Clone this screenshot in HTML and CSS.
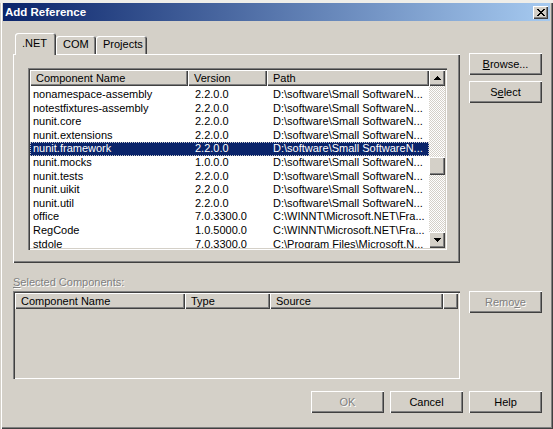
FILE: index.html
```html
<!DOCTYPE html>
<html>
<head>
<meta charset="utf-8">
<title>Add Reference</title>
<link rel="stylesheet" href="styles.css">
</head>
<body>
<div class="topstrip"></div>
<div class="window">
  <div class="titlebar">
    <span class="title">Add Reference</span>
    <span class="close"><svg width="8" height="7" viewBox="0 0 8 7"><path d="M0 0h2v1H0zM6 0h2v1H6zM1 1h2v1H1zM5 1h2v1H5zM2 2h4v1H2zM3 3h2v1H3zM2 4h4v1H2zM1 5h2v1H1zM5 5h2v1H5zM0 6h2v1H0zM6 6h2v1H6z" fill="#000"/></svg></span>
  </div>
  <div class="client">
    <div class="upper">
      <div class="tabctl">
        <div class="tabs">
          <div class="tab active t-net">.NET</div>
          <div class="tab t-com">COM</div>
          <div class="tab t-proj">Projects</div>
        </div>
        <div class="panel">
          <div class="listbox list1">
            <div class="lb-body">
              <div class="lv-header cols1">
                <div class="hcell">Component Name</div>
                <div class="hcell">Version</div>
                <div class="hcell">Path</div>
              </div>
              <div class="lv-rows">
                <div class="row cols1"><span class="c1">nonamespace-assembly</span><span class="c2">2.2.0.0</span><span class="c3">D:\software\Small SoftwareN...</span></div>
                <div class="row cols1"><span class="c1">notestfixtures-assembly</span><span class="c2">2.2.0.0</span><span class="c3">D:\software\Small SoftwareN...</span></div>
                <div class="row cols1"><span class="c1">nunit.core</span><span class="c2">2.2.0.0</span><span class="c3">D:\software\Small SoftwareN...</span></div>
                <div class="row cols1"><span class="c1">nunit.extensions</span><span class="c2">2.2.0.0</span><span class="c3">D:\software\Small SoftwareN...</span></div>
                <div class="row cols1 selected"><span class="c1">nunit.framework</span><span class="c2">2.2.0.0</span><span class="c3">D:\software\Small SoftwareN...</span></div>
                <div class="row cols1"><span class="c1">nunit.mocks</span><span class="c2">1.0.0.0</span><span class="c3">D:\software\Small SoftwareN...</span></div>
                <div class="row cols1"><span class="c1">nunit.tests</span><span class="c2">2.2.0.0</span><span class="c3">D:\software\Small SoftwareN...</span></div>
                <div class="row cols1"><span class="c1">nunit.uikit</span><span class="c2">2.2.0.0</span><span class="c3">D:\software\Small SoftwareN...</span></div>
                <div class="row cols1"><span class="c1">nunit.util</span><span class="c2">2.2.0.0</span><span class="c3">D:\software\Small SoftwareN...</span></div>
                <div class="row cols1"><span class="c1">office</span><span class="c2">7.0.3300.0</span><span class="c3">C:\WINNT\Microsoft.NET\Fra...</span></div>
                <div class="row cols1"><span class="c1">RegCode</span><span class="c2">1.0.5000.0</span><span class="c3">C:\WINNT\Microsoft.NET\Fra...</span></div>
                <div class="row cols1"><span class="c1">stdole</span><span class="c2">7.0.3300.0</span><span class="c3">C:\Program Files\Microsoft.N...</span></div>
              </div>
            </div>
            <div class="vscroll">
              <div class="sb-btn"><svg width="7" height="4" viewBox="0 0 7 4"><path d="M3 0h1v1h1v1h1v1h1v1H0V3h1V2h1V1h1z" fill="#000"/></svg></div>
              <div class="sb-track"><div class="thumb"></div></div>
              <div class="sb-btn"><svg width="7" height="4" viewBox="0 0 7 4"><path d="M0 0h7v1H6v1H5v1H4v1H3V3H2V2H1V1H0z" fill="#000"/></svg></div>
            </div>
          </div>
        </div>
      </div>
      <div class="side">
        <button class="btn"><u>B</u>rowse...</button>
        <button class="btn">S<u>e</u>lect</button>
      </div>
    </div>
    <div class="label disabled"><u>S</u>elected Components:</div>
    <div class="lower">
      <div class="listbox list2">
        <div class="lv-header cols2">
          <div class="hcell">Component Name</div>
          <div class="hcell">Type</div>
          <div class="hcell">Source</div>
          <div class="hcell"></div>
        </div>
      </div>
      <div class="side">
        <button class="btn disabled">Remo<u>v</u>e</button>
      </div>
    </div>
    <div class="footer">
      <button class="btn disabled">OK</button>
      <button class="btn">Cancel</button>
      <button class="btn">Help</button>
    </div>
  </div>
</div>
</body>
</html>
```
FILE: styles.css
```css
* { box-sizing: border-box; }
html, body { margin: 0; padding: 0; }
body {
  width: 553px;
  height: 429px;
  overflow: hidden;
  background: #D4D0C8;
  font-family: "Liberation Sans", Arial, sans-serif;
  font-size: 11px;
  color: #000;
}
.topstrip { height: 3px; background: #efeee9; }
.window {
  height: 426px;
  padding: 0 3px 2px 3px;
  display: flex;
  flex-direction: column;
  background: #D4D0C8;
  box-shadow: inset 1px 0 #D4D0C8, inset 2px 0 #fff, inset -1px -1px #404040, inset -2px -2px #808080;
}
.titlebar {
  height: 18px;
  flex: none;
  display: flex;
  align-items: center;
  justify-content: space-between;
  padding: 0 2px 0 2px;
  background: linear-gradient(to right, #0A246A, #A6CAF0);
  color: #fff;
}
.title { font-weight: bold; font-size: 11.5px; }
.close {
  width: 15px;
  height: 13px;
  display: flex;
  align-items: center;
  justify-content: center;
  background: #D4D0C8;
  box-shadow: inset 1px 1px #fff, inset -1px -1px #404040, inset -2px -2px #808080;
}
.client {
  flex: 1;
  padding: 12px 8px 0 10px;
  display: flex;
  flex-direction: column;
}
.upper { display: flex; }
.tabctl { width: 447px; }
.tabs {
  display: flex;
  align-items: flex-end;
  height: 21px;
  padding-left: 2px;
  position: relative;
  z-index: 1;
}
.tab {
  height: 18px;
  padding: 2px 0 0 7px;
  line-height: 13px;
  background: #D4D0C8;
  border-radius: 3px 3px 0 0;
  box-shadow: inset 1px 1px #fff, inset -1px 0 #404040, inset -2px 0 #808080;
}
.tab.active { height: 22px; margin-bottom: -1px; padding-top: 4px; }
.t-net { width: 41px; }
.t-com { width: 40px; }
.t-proj { width: 51px; }
.panel {
  height: 209px;
  padding: 14px 13px 13px 15px;
  box-shadow: inset 1px 1px #fff, inset -1px -1px #404040, inset -2px -2px #808080;
}
.listbox {
  padding: 2px;
  box-shadow: inset 1px 1px #808080, inset 2px 2px #404040, inset -1px -1px #fff, inset -2px -2px #D4D0C8;
}
.list1 {
  width: 419px;
  height: 182px;
  background: #fff;
  display: flex;
}
.lb-body { width: 399px; overflow: hidden; }
.lv-header { display: grid; height: 16px; }
.cols1 { display: grid; grid-template-columns: 158px 79px 162px; }
.cols2 { grid-template-columns: 170px 85px 173px 15px; }
.hcell {
  background: #D4D0C8;
  padding-left: 6px;
  line-height: 16px;
  white-space: nowrap;
  overflow: hidden;
  box-shadow: inset 1px 1px #fff, inset -1px -1px #404040, inset -2px -2px #808080;
}
.lv-rows { padding-top: 2px; }
.row { height: 13.6px; line-height: 13.6px; white-space: nowrap; }
.row span { overflow: hidden; }
.c1 { padding-left: 3px; }
.c2 { padding-left: 7px; }
.c3 { padding-left: 6px; }
.row.selected {
  background: #0A246A;
  color: #fff;
  outline: 1px dotted #c9c9c9;
  outline-offset: -1px;
}
.vscroll { width: 16px; display: flex; flex-direction: column; }
.sb-btn {
  height: 16px;
  flex: none;
  display: flex;
  align-items: center;
  justify-content: center;
  background: #D4D0C8;
  box-shadow: inset 1px 1px #fff, inset -1px -1px #404040, inset -2px -2px #808080;
}
.sb-track {
  flex: 1;
  background: repeating-conic-gradient(#D4D0C8 0 25%, #fff 0 50%) 0 0 / 2px 2px;
}
.thumb {
  height: 18px;
  margin-top: 71px;
  background: #D4D0C8;
  box-shadow: inset 1px 1px #fff, inset -1px -1px #404040, inset -2px -2px #808080;
}
.side {
  display: flex;
  flex-direction: column;
  gap: 6px;
  margin-left: 9px;
}
.upper .side { padding-top: 20px; }
.btn {
  width: 73px;
  height: 22px;
  padding: 0;
  border: none;
  background: #D4D0C8;
  font: inherit;
  color: #000;
  text-align: center;
  box-shadow: inset 1px 1px #fff, inset -1px -1px #404040, inset -2px -2px #808080;
}
.disabled { color: #808080; text-shadow: 1px 1px 0 #fff; }
.btn.disabled { color: #808080; }
.label { margin-top: 13px; height: 13px; line-height: 13px; }
.lower { display: flex; margin-top: 2px; }
.list2 { width: 447px; height: 88px; background: #D4D0C8; }
.footer {
  display: flex;
  justify-content: flex-end;
  gap: 6px;
  margin-top: 12px;
}
```
